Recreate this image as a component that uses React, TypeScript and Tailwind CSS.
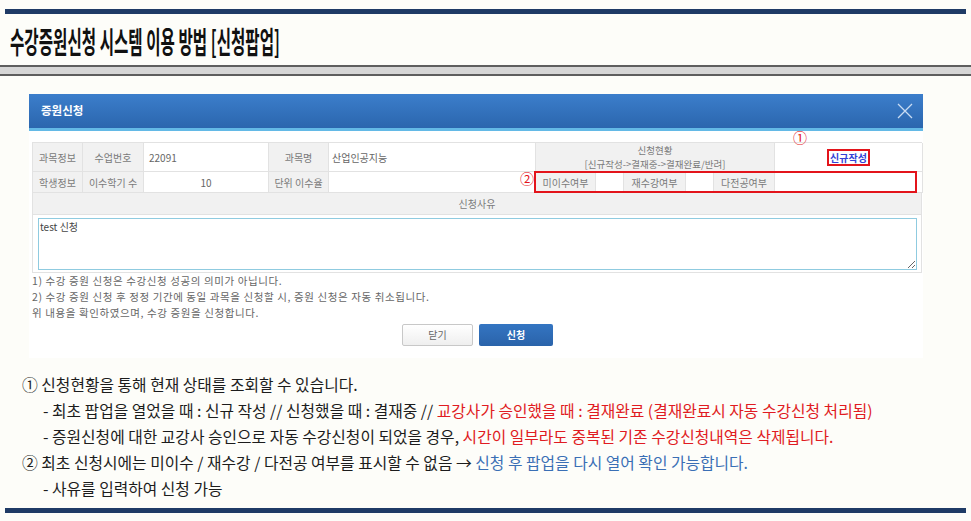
const gray = "flex items-center justify-center shrink-0 border-r border-b border-[#e2e2e2] bg-[#f1f1f1] text-[#7a7a7a]";
const white = "flex items-center shrink-0 border-r border-b border-[#e2e2e2] bg-white text-[#666]";

function CloseIcon() {
  return (
    <svg width="16" height="16" viewBox="0 0 16 16" fill="none">
      <path d="M1 1 L15 15 M15 1 L1 15" stroke="#c9dcf2" strokeWidth="1.3" />
    </svg>
  );
}

function RequestPopup() {
  return (
    <div className="relative mt-[18px] ml-[29px] w-[894px] bg-white text-[10px]">
      {/* title bar */}
      <div className="h-[34px] flex items-center justify-between pl-[12px] pr-[10px] bg-linear-to-b from-[#3c7ecb] to-[#2b66ae]">
        <span className="text-[11.5px] font-bold text-white">증원신청</span>
        <CloseIcon />
      </div>
      <div className="h-[3px] bg-[#63b9e6]" />

      <div className="pt-[11px] pl-[3px] pb-[12px]">
        <div className="w-[890px] border-t border-l border-[#e2e2e2]">
          <div className="flex h-[29px]">
            <div className={`${gray} w-[50px]`}>과목정보</div>
            <div className={`${gray} w-[61px]`}>수업번호</div>
            <div className={`${white} w-[125px] pl-[5px]`}>22091</div>
            <div className={`${gray} w-[60px]`}>과목명</div>
            <div className={`${white} w-[207px] pl-[3px]`}>산업인공지능</div>
            <div className={`${gray} w-[239px] flex-col text-[9.5px] leading-[14px]`}>
              <span>신청현황</span>
              <span>[신규작성-&gt;결재중-&gt;결재완료/반려]</span>
            </div>
            <div className={`${white} w-[148px] justify-center`}>
              <span className="border-2 border-[#e3141b] px-[1px] leading-[13px] font-bold text-[#3442d6]">신규작성</span>
            </div>
          </div>
          <div className="flex h-[21px]">
            <div className={`${gray} w-[50px]`}>학생정보</div>
            <div className={`${gray} w-[61px]`}>이수학기 수</div>
            <div className={`${white} w-[125px] justify-center`}>10</div>
            <div className={`${gray} w-[60px]`}>단위 이수율</div>
            <div className={`${white} w-[207px]`} />
            <div className={`${gray} w-[60px]`}>미이수여부</div>
            <div className={`${white} w-[28px]`} />
            <div className={`${gray} w-[62px]`}>재수강여부</div>
            <div className={`${white} w-[28px]`} />
            <div className={`${gray} w-[61px]`}>다전공여부</div>
            <div className={`${white} w-[148px]`} />
          </div>
          <div className="flex h-[22px] items-center justify-center border-r border-b border-[#e2e2e2] bg-[#f1f1f1] text-[#7a7a7a]">
            신청사유
          </div>
          <div className="h-[58px] pt-[3px] pl-[5px] border-r border-b border-[#e2e2e2] bg-white">
            <textarea
              readOnly
              defaultValue="test 신청"
              className="block w-[879px] h-[52px] resize border border-[#8fcbe0] px-[1px] py-[2px] text-[10px] leading-[12px] text-[#444] outline-none"
            />
          </div>
        </div>

        <div className="text-[10.5px] leading-[15.5px] tracking-[0.6px] text-[#666]">
          <p>1) 수강 증원 신청은 수강신청 성공의 의미가 아닙니다.</p>
          <p>2) 수강 증원 신청 후 정정 기간에 동일 과목을 신청할 시, 증원 신청은 자동 취소됩니다.</p>
          <p className="mt-[1px]">위 내용을 확인하였으며, 수강 증원을 신청합니다.</p>
        </div>

        <div className="mt-[3px] flex justify-center gap-[6px]">
          <button className="w-[71px] h-[22px] rounded-[2px] border border-[#c8c8c8] bg-linear-to-b from-white to-[#efefef] text-[10px] text-[#666]">
            닫기
          </button>
          <button className="w-[74px] h-[22px] rounded-[2px] bg-linear-to-b from-[#3475c2] to-[#2a63aa] text-[10px] font-bold text-white">
            신청
          </button>
        </div>
      </div>

      {/* annotation marks over the form */}
      <span className="absolute left-[764px] top-[36px] text-[14px] leading-none text-[#e3141b]">①</span>
      <span className="absolute left-[491px] top-[77px] text-[14px] leading-none text-[#e3141b]">②</span>
      <div className="absolute left-[505px] top-[77px] w-[383px] h-[22px] border-2 border-[#e3141b]" />
    </div>
  );
}

export default function App() {
  return (
    <div className="w-[971px] h-[521px] overflow-hidden bg-[#fdfdf9] font-['Noto_Sans_CJK_KR',sans-serif] text-[#1c1c1c]">
      <div className="pt-[9px] px-[5px]">
        <div className="h-[5px] bg-[#1f3b66]" />
      </div>
      <div className="h-[51px] pl-[10px] flex items-center">
        <h1 className="inline-block origin-left scale-x-[0.52] text-[30px] font-bold leading-none whitespace-nowrap text-[#111]">
          수강증원신청 시스템 이용 방법 [신청팝업]
        </h1>
      </div>
      <div className="h-[11px] border-y-2 border-[#5e5e5e] bg-[#d6d6d6]" />

      <RequestPopup />

      <div className="mt-[14px] text-[15.8px] leading-[26px] whitespace-nowrap">
        <p className="pl-[22px]">① 신청현황을 통해 현재 상태를 조회할 수 있습니다.</p>
        <p className="pl-[43px]">
          - 최초 팝업을 열었을 때 : 신규 작성 // 신청했을 때 : 결재중 //{" "}
          <span className="text-[#e01b22]">교강사가 승인했을 때 : 결재완료 (결재완료시 자동 수강신청 처리됨)</span>
        </p>
        <p className="pl-[43px]">
          - 증원신청에 대한 교강사 승인으로 자동 수강신청이 되었을 경우,{" "}
          <span className="text-[#e01b22]">시간이 일부라도 중복된 기존 수강신청내역은 삭제됩니다.</span>
        </p>
        <p className="pl-[22px]">
          ② 최초 신청시에는 미이수 / 재수강 / 다전공 여부를 표시할 수 없음 →{" "}
          <span className="text-[#3a6fb5]">신청 후 팝업을 다시 열어 확인 가능합니다.</span>
        </p>
        <p className="pl-[43px]">- 사유를 입력하여 신청 가능</p>
      </div>

      <div className="mt-[6px] px-[5px]">
        <div className="h-[5px] bg-[#1f3b66]" />
      </div>
    </div>
  );
}
